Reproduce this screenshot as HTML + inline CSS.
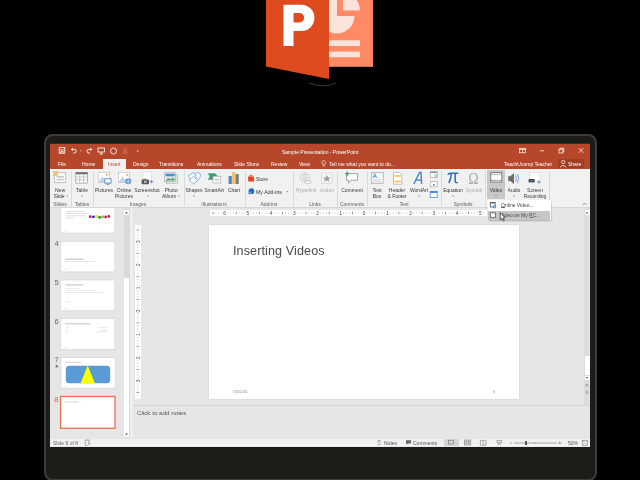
<!DOCTYPE html>
<html><head><meta charset="utf-8">
<style>
html,body{margin:0;padding:0;width:640px;height:480px;overflow:hidden;background:#000;}
*{box-sizing:border-box;}
body{position:relative;font-family:"Liberation Sans",sans-serif;}
.a{position:absolute;}
svg{will-change:transform;}
.t{will-change:transform;position:absolute;white-space:nowrap;font-size:5px;line-height:6px;color:#383838;}
.w{color:#fff;}
.lbl{will-change:transform;position:absolute;white-space:nowrap;font-size:5px;line-height:6px;color:#5c5c5c;top:201.3px;}
.sep{position:absolute;top:171px;width:1px;height:35px;background:#dadada;}
.c{text-align:center;transform:translateX(-50%);}
.dd{font-size:2.6px;color:#777;vertical-align:0.6px;}
</style></head><body>

<!-- PowerPoint logo -->
<svg class="a" style="left:0;top:0" width="640" height="100" viewBox="0 0 640 100">
  <rect x="328" y="0" width="45" height="66.8" fill="#ff8a65"/>
  <path d="M337 -2 V16 H354.5 A17.5 17.5 0 1 1 337 -1.5 Z" fill="#fbe3db"/>
  <path d="M343 10.4 V-6.6 A17 17 0 0 1 360 10.4 Z" fill="#fbe3db"/>
  <rect x="329" y="40.3" width="31" height="5.7" fill="#fbe3db"/>
  <rect x="329" y="51.6" width="31" height="5.6" fill="#fbe3db"/>
  <path d="M266 0 H329 V79 L266 66.5 Z" fill="#dd4b1e"/>
  <path d="M283.5 46 V4.7 H301.3 A13.15 13.15 0 0 1 301.3 31 H293.5 V46 Z M293.5 13.1 V22.5 H299.5 A4.7 4.7 0 0 0 299.5 13.1 Z" fill="#fff" fill-rule="evenodd"/>
  <path d="M308.8 83.2 Q324 88.6 336 83" stroke="#383838" stroke-width="1" fill="none"/>
</svg>

<!-- Bezel -->
<div class="a" style="left:44px;top:134.2px;width:553px;height:346.5px;border-radius:8.5px;background:#1c1c19;border:2px solid #3c3c3e;"></div>

<!-- Screen -->
<div class="a" style="left:50px;top:143.5px;width:539.5px;height:303px;background:#e6e6e6;overflow:hidden;">
</div>

<!-- Title bar + tabs -->
<div class="a" style="left:50px;top:143px;width:540px;height:1px;background:#22372b;"></div>
<div class="a" style="left:50px;top:143.9px;width:540px;height:25.1px;background:#b7472a;"></div>
<div class="t w" style="left:281.5px;top:148.5px;">Sample Presentation - PowerPoint</div>

<!-- tabs -->
<div class="a" style="left:102.5px;top:158.5px;width:23.7px;height:11px;background:#f1f1f1;"></div>
<div class="t w" style="left:57.8px;top:161px;">File</div>
<div class="t w" style="left:82px;top:161px;">Home</div>
<div class="t" style="left:107.8px;top:161px;color:#b7472a">Insert</div>
<div class="t w" style="left:132.5px;top:161px;">Design</div>
<div class="t w" style="left:159px;top:161px;">Transitions</div>
<div class="t w" style="left:197px;top:161px;">Animations</div>
<div class="t w" style="left:234px;top:161px;">Slide Show</div>
<div class="t w" style="left:270.6px;top:161px;">Review</div>
<div class="t w" style="left:298.7px;top:161px;">View</div>
<div class="t w" style="left:328.7px;top:161px;">Tell me what you want to do...</div>
<div class="t w" style="left:504px;top:161px;">TeachUcomp Teacher</div>

<!-- Ribbon -->
<div class="a" style="left:50px;top:169px;width:539.5px;height:38.5px;background:#f1f1f1;border-bottom:1px solid #d6d6d6"></div>


<!-- QAT icons -->
<svg class="a" style="left:50px;top:143px" width="100" height="14" viewBox="50 143 100 14">
  <g stroke="#fff" stroke-width="0.8" fill="none">
    <rect x="59.2" y="147.6" width="5.6" height="5.6"/>
    <path d="M59.2 149.9 H64.8 M60.8 153.2 V151.5 H63.2 V153.2"/>
    <path d="M72.6 149.4 H74.4 A1.8 1.8 0 0 1 74.4 153 H73.2" stroke-width="0.9"/>
    <path d="M90.6 149.4 H88.8 A1.8 1.8 0 0 0 88.8 153 H90" stroke-width="0.9"/>
    <rect x="98" y="148" width="6.5" height="4"/>
    <path d="M101.2 152 V154 M99.5 154 H103"/>
    <circle cx="113.5" cy="151" r="3"/>
  </g>
  <path d="M80 150.5 H82 L81 151.6 Z" fill="#fff"/><path d="M70.8 149.4 L73 147.8 V151 Z M92.4 149.4 L90.2 147.8 V151 Z" fill="#fff"/>
  <path d="M123.1 153.2 Q123.1 151.3 125.2 151.3 Q127.3 151.3 127.3 153.2 Z" stroke="#d98b75" stroke-width="0.6" fill="none"/><circle cx="125.2" cy="149.5" r="1.3" stroke="#d98b75" stroke-width="0.6" fill="none"/>
  <path d="M136.7 150.7 H138.7 L137.7 151.9 Z" fill="#fff"/>
</svg>
<!-- window controls -->
<svg class="a" style="left:510px;top:143px" width="80" height="14" viewBox="510 143 80 14">
  <g stroke="#fff" stroke-width="0.7" fill="none">
    <rect x="519.6" y="148.3" width="6" height="4.5"/>
    <path d="M519.6 149.5 H525.6 M522.6 149.5 V152.8"/>
    <path d="M540 150.8 H544.2"/>
    <rect x="559" y="149.2" width="3.8" height="3.8"/>
    <path d="M560 149.2 V148.2 H563.8 V152 H562.8"/>
    <path d="M578.7 148 L583.4 152.8 M583.4 148 L578.7 152.8"/>
  </g>
</svg>
<div class="a" style="left:557.5px;top:159.3px;width:26.3px;height:8.6px;background:#a13d23"></div>
<svg class="a" style="left:559px;top:159px" width="9" height="9" viewBox="559 159 9 9">
  <g stroke="#fff" stroke-width="0.7" fill="none">
    <circle cx="563.2" cy="162" r="1.7"/>
    <path d="M560.3 167.5 A3 3 0 0 1 566 167.5"/>
  </g>
</svg>
<div class="t w" style="left:567.9px;top:161px;">Share</div>
<!-- tell me bulb -->
<svg class="a" style="left:321px;top:160px" width="6" height="7" viewBox="321 160 6 7">
  <path d="M322 163 A1.8 1.8 0 1 1 325.4 163 Q324.6 164 324.6 165 H322.8 Q322.8 164 322 163 Z M322.9 166 H324.5" stroke="#fff" stroke-width="0.6" fill="none"/>
</svg>

<!-- ribbon separators -->
<div class="sep" style="left:70.6px"></div>
<div class="sep" style="left:92.5px"></div>
<div class="sep" style="left:183.5px"></div>
<div class="sep" style="left:244.6px"></div>
<div class="sep" style="left:292.7px"></div>
<div class="sep" style="left:337.3px"></div>
<div class="sep" style="left:366.5px"></div>
<div class="sep" style="left:440.5px"></div>
<div class="sep" style="left:485.3px"></div>
<div class="sep" style="left:549px"></div>

<!-- video highlight -->
<div class="a" style="left:487.2px;top:170px;width:17.6px;height:29.2px;background:#c8c8c8"></div>

<!-- ribbon icons -->
<svg class="a" style="left:50px;top:169px" width="540" height="40" viewBox="50 169 540 40">
  <!-- New slide -->
  <rect x="54.3" y="172.8" width="11.5" height="9.8" fill="#fff" stroke="#9a9a9a" stroke-width="0.6"/>
  <rect x="56.5" y="176" width="7.5" height="1.6" fill="#c9c9c9"/>
  <rect x="56.5" y="178.8" width="7.5" height="1.6" fill="#c9c9c9"/>
  <rect x="53.8" y="171.6" width="4" height="4" fill="#f6c27c" stroke="#e3a24c" stroke-width="0.4"/>
  <!-- Table -->
  <rect x="75.8" y="172.3" width="11.8" height="10.8" fill="#fff" stroke="#8a8a8a" stroke-width="0.6"/>
  <rect x="75.8" y="172.3" width="11.8" height="2" fill="#6a6a6a"/>
  <path d="M75.8 177 H87.6 M75.8 179.8 H87.6 M79.7 174.3 V183 M83.6 174.3 V183" stroke="#9a9a9a" stroke-width="0.5"/>
  <!-- Pictures -->
  <rect x="98.2" y="172.2" width="11.2" height="10.2" fill="#fff" stroke="#a8a8a8" stroke-width="0.5"/>
  <path d="M98.5 182.2 L102 176.5 L105 180 L107 178.5 L109.2 181 V182.2 Z" fill="#bcd3ea"/>
  <circle cx="107" cy="174.8" r="1.1" fill="#f5b040"/>
  <rect x="104.8" y="178.8" width="6.2" height="4.3" fill="#fff" stroke="#3c7fc5" stroke-width="0.8"/>
  <path d="M107.9 183.1 V184.3 M106.5 184.3 H109.3" stroke="#3c7fc5" stroke-width="0.8"/>
  <!-- Online Pictures -->
  <rect x="118.4" y="172.2" width="11.2" height="10.2" fill="#fff" stroke="#a8a8a8" stroke-width="0.5"/>
  <path d="M118.7 182.2 L122.2 176.5 L125.2 180 L127.2 178.5 L129.4 181 V182.2 Z" fill="#bcd3ea"/>
  <circle cx="127.2" cy="174.8" r="1.1" fill="#f5b040"/>
  <circle cx="128.2" cy="181.3" r="3" fill="#5b9bd5"/>
  <path d="M126.2 181.3 H130.2 M128.2 178.3 V184.3" stroke="#fff" stroke-width="0.5"/>
  <!-- Screenshot -->
  <rect x="143" y="172" width="8" height="8.5" fill="#fff" stroke="#bdbdbd" stroke-width="0.5" stroke-dasharray="1 0.6"/>
  <rect x="141.6" y="179.6" width="7.4" height="4.6" rx="0.6" fill="#5a5a5a"/>
  <rect x="143.5" y="178.8" width="2.6" height="1.2" fill="#5a5a5a"/>
  <circle cx="145.3" cy="181.8" r="1.3" fill="#fff"/>
  <circle cx="145.3" cy="181.8" r="0.8" fill="#5a5a5a"/>
  <path d="M151.6 180 V183.4 M149.9 181.7 H153.3" stroke="#3c7fc5" stroke-width="0.8"/>
  <!-- Photo Album -->
  <rect x="166.4" y="174.6" width="11.2" height="8.6" fill="#e4e4e4" stroke="#a0a0a0" stroke-width="0.5"/>
  <rect x="164.6" y="172.8" width="11" height="8.6" fill="#fff" stroke="#8a8a8a" stroke-width="0.5"/>
  <rect x="165.5" y="173.7" width="9.2" height="6.8" fill="#dfe9f3"/>
  <rect x="165.5" y="173.7" width="9.2" height="2.6" fill="#4a8ed0"/>
  <path d="M165.5 180.5 L168.2 178 L170.6 179.2 L172.6 177.8 L174.7 179 V180.5 Z" fill="#5aa060"/>
  <!-- Shapes -->
  <path d="M195 174 Q197.5 171.2 200 173.2 Q201.6 176 199 179 L195.5 182.6 Z" fill="#fff" stroke="#5a95d5" stroke-width="0.7"/>
  <path d="M188.3 175.6 L193.8 172.4 L196.6 177.8 L191 181 Z" fill="#fff" stroke="#5a95d5" stroke-width="0.7"/>
  <path d="M193.6 176.2 L197.6 180.2 L193.6 184.2 L189.6 180.2 Z" fill="#fff" stroke="#5a95d5" stroke-width="0.7"/>
  <!-- SmartArt -->
  <path d="M207.8 173.2 H215 L218 176.5 L215 179.8 H207.8 L209.6 176.5 Z" fill="#3e9e77"/>
  <rect x="213" y="176.2" width="7.8" height="6.8" fill="#fff" stroke="#9a9a9a" stroke-width="0.6"/>
  <rect x="214.6" y="178.4" width="4.6" height="2.4" fill="#d4d4d4"/>
  <!-- Chart -->
  <rect x="228.6" y="176" width="3.2" height="8" fill="#4a86c8"/>
  <rect x="232" y="172" width="3.2" height="12" fill="#f5c36b"/>
  <rect x="235.5" y="174" width="3.2" height="10" fill="#7b7b7b"/>
  <!-- Store -->
  <path d="M248 176.4 H253.9 L254.2 181.6 H248.3 Z" fill="#e9451d"/>
  <path d="M249.3 176.4 L249.8 174.7 H252.2 L252.6 176.4" fill="#f06a48"/>
  <!-- My add-ins -->
  <circle cx="251.4" cy="191.2" r="2.9" fill="#1e6fc8"/>
  <path d="M248.2 192.2 H250.4 V194.4 H248.2 Z" fill="#1e6fc8" stroke="#f1f1f1" stroke-width="0.5"/>
  <path d="M286.5 191.2 H288.5 L287.5 192.3 Z" fill="#555"/>
  <!-- Hyperlink (faded) -->
  <circle cx="305" cy="177.6" r="4.8" fill="none" stroke="#c8c8c8" stroke-width="0.6"/>
  <path d="M300.2 177.6 H309.8 M305 172.8 V182.4 M301 175 H309 M301 180.2 H309 M305 172.8 Q301.8 177.6 305 182.4 Q308.2 177.6 305 172.8" stroke="#c8c8c8" stroke-width="0.5" fill="none"/>
  <rect x="305" y="180.6" width="6" height="3" rx="1.5" fill="#f1f1f1" stroke="#b8b8b8" stroke-width="0.6"/>
  <!-- Action (faded) -->
  <rect x="321.3" y="173" width="11" height="10.5" fill="#f5f5f5" stroke="#cfcfcf" stroke-width="0.6"/>
  <path d="M326.8 174.8 L328 177.4 L330.8 177.6 L328.6 179.4 L329.4 182 L326.8 180.5 L324.2 182 L325 179.4 L322.8 177.6 L325.6 177.4 Z" fill="#a0a0a0"/>
  <!-- Comment -->
  <path d="M346.5 173.6 H357.6 V180.2 H351 L348.6 183.2 V180.2 H346.5 Z" fill="#fff" stroke="#6a6a6a" stroke-width="0.6"/>
  <path d="M347.3 171.4 V175.8 M345.1 173.6 H349.5" stroke="#3ea07a" stroke-width="1.3"/>
  <!-- Text box -->
  <rect x="371.4" y="172.4" width="11.8" height="11" fill="#f7f7f7" stroke="#9b9b9b" stroke-width="0.6"/>
  <path d="M373 178 L374.8 173.5 L376.6 178 M373.6 176.5 H376" stroke="#3c7fc5" stroke-width="0.7" fill="none"/>
  <path d="M373 179.8 H381.6 M373 181.6 H381.6" stroke="#c9c9c9" stroke-width="0.7"/>
  <!-- Header footer -->
  <path d="M393.5 172.4 H399.6 L401.8 174.6 V184.2 H393.5 Z" fill="#fff" stroke="#9b9b9b" stroke-width="0.6"/>
  <rect x="394.5" y="175.2" width="6.3" height="1.5" fill="#f5b942"/>
  <rect x="394.5" y="180.8" width="6.3" height="1.5" fill="#f5b942"/>
  <!-- WordArt -->
  <path d="M413.8 184 L419.6 172.4 H421 L421.6 184 M415.6 180.2 H421.4" stroke="#3c7fc5" stroke-width="1.3" fill="none"/>
  <!-- small text icons -->
  <rect x="430.2" y="171.8" width="7" height="5.4" fill="#fff" stroke="#8f8f8f" stroke-width="0.5"/>
  <rect x="430.2" y="171.8" width="7" height="1.2" fill="#8f8f8f"/>
  <circle cx="436" cy="176" r="1.4" fill="#fff" stroke="#3c7fc5" stroke-width="0.5"/>
  <rect x="430.2" y="181.7" width="7" height="5.2" fill="#fff" stroke="#8f8f8f" stroke-width="0.5"/>
  <rect x="433" y="184.1" width="1.6" height="1.6" fill="#3c7fc5"/>
  <rect x="430.2" y="191.3" width="7" height="6.2" fill="#fff" stroke="#3c7fc5" stroke-width="0.7"/>
  <rect x="430.2" y="191.3" width="7" height="1.6" fill="#3c7fc5"/>
  <!-- Equation pi -->
  <path d="M447.8 174.8 Q448.5 173.2 450.5 173.2 H458.3 M451.2 173.2 Q451.2 179 448.8 183 M455.2 173.2 V181.5 Q455.4 183 457.8 182.5" stroke="#2b6fbf" stroke-width="1.5" fill="none"/>
  <!-- Omega faded -->
  <text x="0" y="0" font-family="Liberation Serif" font-size="14" fill="#a9a9a9" text-anchor="middle" transform="translate(473.4 183.6) scale(1 1.17)">Ω</text>
  <!-- Video -->
  <rect x="490.8" y="172.6" width="11" height="9.4" fill="#fff" stroke="#6a6a6a" stroke-width="0.8"/>
  <path d="M490.8 174.2 H501.8 M490.8 180.4 H501.8" stroke="#6a6a6a" stroke-width="1.1" stroke-dasharray="0.8 0.8"/>
  <!-- Audio -->
  <path d="M508.2 176.3 H510.3 L514 173.2 V184 L510.3 180.9 H508.2 Z" fill="#6a6a6a"/>
  <path d="M515.6 175.4 Q517 178.6 515.6 181.8 M517.6 174 Q519.6 178.6 517.6 183.2" stroke="#3c7fc5" stroke-width="0.7" fill="none"/>
  <!-- Screen recording -->
  <rect x="530" y="172.4" width="10" height="8.6" fill="#fff" stroke="#9d9d9d" stroke-width="0.4" stroke-dasharray="0.8 0.6"/>
  <rect x="528.6" y="179" width="6" height="3.4" fill="#4a4a4a"/>
  <path d="M529.8 180.7 H533.2" stroke="#3c7fc5" stroke-width="0.8"/>
  <path d="M539 180.4 V183.6 M537.4 182 H540.6" stroke="#3c7fc5" stroke-width="0.8"/>
  <!-- collapse caret -->
  <path d="M582.8 205 L584.6 203.2 L586.4 205" stroke="#555" stroke-width="0.6" fill="none"/>
</svg>

<!-- ribbon text -->
<div class="t c" style="left:60.1px;top:186.6px">New</div>
<div class="t c" style="left:60.5px;top:193.1px">Slide <span class="dd">▼</span></div>
<div class="t c" style="left:81.75px;top:186.6px">Table</div>
<div class="t c" style="left:81.75px;top:193.1px"><span class="dd">▼</span></div>
<div class="t c" style="left:103.75px;top:186.6px">Pictures</div>
<div class="t c" style="left:124.4px;top:186.6px">Online</div>
<div class="t c" style="left:124.1px;top:193.1px">Pictures</div>
<div class="t c" style="left:147.25px;top:186.6px">Screenshot</div>
<div class="t c" style="left:147.7px;top:193.1px"><span class="dd">▼</span></div>
<div class="t c" style="left:171.1px;top:186.6px">Photo</div>
<div class="t c" style="left:171px;top:193.1px">Album <span class="dd">▼</span></div>
<div class="t c" style="left:194px;top:186.6px">Shapes</div>
<div class="t c" style="left:194px;top:193.1px"><span class="dd">▼</span></div>
<div class="t c" style="left:214px;top:186.6px">SmartArt</div>
<div class="t c" style="left:234px;top:186.6px">Chart</div>
<div class="t" style="left:255.75px;top:175.8px">Store</div>
<div class="t" style="left:255.75px;top:188.7px;font-size:5.25px">My Add-ins</div>
<div class="t c" style="left:305.8px;top:186.6px;color:#aaa">Hyperlink</div>
<div class="t c" style="left:326.9px;top:186.6px;color:#aaa">Action</div>
<div class="t c" style="left:352px;top:186.6px">Comment</div>
<div class="t c" style="left:377.2px;top:186.6px">Text</div>
<div class="t c" style="left:377.2px;top:193.1px">Box</div>
<div class="t c" style="left:397.2px;top:186.6px">Header</div>
<div class="t c" style="left:397px;top:193.1px">&amp; Footer</div>
<div class="t c" style="left:418.5px;top:186.6px">WordArt</div>
<div class="t c" style="left:418.6px;top:193.1px"><span class="dd">▼</span></div>
<div class="t c" style="left:452.9px;top:186.6px">Equation</div>
<div class="t c" style="left:453px;top:193.1px"><span class="dd">▼</span></div>
<div class="t c" style="left:473.75px;top:186.6px;color:#aaa">Symbol</div>
<div class="t c" style="left:496.3px;top:186.6px">Video</div>
<div class="t c" style="left:496px;top:193.1px"><span class="dd">▼</span></div>
<div class="t c" style="left:513.9px;top:186.6px">Audio</div>
<div class="t c" style="left:514px;top:193.1px"><span class="dd">▼</span></div>
<div class="t c" style="left:535px;top:186.6px">Screen</div>
<div class="t c" style="left:535.25px;top:193.1px">Recording</div>

<div class="lbl c" style="left:60.3px">Slides</div>
<div class="lbl c" style="left:81.5px">Tables</div>
<div class="lbl c" style="left:137.8px">Images</div>
<div class="lbl c" style="left:214px">Illustrations</div>
<div class="lbl c" style="left:268.6px">Add-ins</div>
<div class="lbl c" style="left:315.1px">Links</div>
<div class="lbl c" style="left:352px">Comments</div>
<div class="lbl c" style="left:403.5px">Text</div>
<div class="lbl c" style="left:462.6px">Symbols</div>

<!-- Left pane -->
<div class="a" style="left:50px;top:208px;width:80px;height:230.3px;background:#e6e6e6;"></div>
<!-- left scrollbar -->
<div class="a" style="left:123.5px;top:208px;width:6px;height:230px;background:#dadada;"></div>
<div class="a" style="left:123.8px;top:277.5px;width:5.5px;height:154.5px;background:#fff;"></div>
<div class="a" style="left:123.8px;top:209.7px;width:5.5px;height:5.5px;background:#fff;"></div>
<div class="a" style="left:123.8px;top:432px;width:5.5px;height:5px;background:#fff;"></div>
<svg class="a" style="left:123px;top:209px" width="7" height="30" viewBox="123 209 7 30"><path d="M125.2 213.4 L126.5 211.6 L127.8 213.4 Z" fill="#555"/></svg>
<svg class="a" style="left:123px;top:430px" width="7" height="8" viewBox="123 430 7 8"><path d="M125.2 433.6 L126.5 435.4 L127.8 433.6 Z" fill="#555"/></svg>
<div class="a" style="left:129.5px;top:208px;width:3px;height:230px;background:#eeeeee;"></div>

<!-- thumbnails -->
<svg class="a" style="left:50px;top:208px" width="74" height="230" viewBox="50 208 74 230">
  <defs><filter id="sh" x="-10%" y="-10%" width="120%" height="130%"><feDropShadow dx="0" dy="0.3" stdDeviation="0.4" flood-color="#000" flood-opacity="0.25"/></filter></defs>
  <!-- thumb 3 -->
  <rect x="60.8" y="202" width="54" height="31" fill="#fff" stroke="#d2d2d2" stroke-width="0.6"/>
  <g fill="#d2d2d2">
    <rect x="66" y="211" width="18" height="0.7"/>
    <rect x="66" y="213.2" width="21" height="0.7"/>
    <rect x="66" y="215.5" width="20" height="0.7"/>
    <rect x="66" y="217.6" width="8" height="0.7"/>
  </g>
  <g>
    <circle cx="90.2" cy="216.7" r="1.4" fill="#e02020"/>
    <circle cx="93.4" cy="216.9" r="1.4" fill="#2030d0"/>
    <circle cx="96.4" cy="216.4" r="1.4" fill="#f0d010"/>
    <circle cx="99.5" cy="217.2" r="1.5" fill="#10a020"/>
    <circle cx="102.6" cy="216.9" r="1.4" fill="#f08020"/>
    <circle cx="105.6" cy="217" r="1.4" fill="#7040a0"/>
    <circle cx="108.8" cy="216.5" r="1.4" fill="#e02020"/>
  </g>
  <path d="M90.2 218 V224 M93.4 218 V224 M96.4 218 V224 M99.5 218.5 V225 M102.6 218 V224 M105.6 218 V224 M108.8 218 V224" stroke="#e0e0e0" stroke-width="0.4"/>
  <rect x="65" y="230.8" width="2.5" height="0.5" fill="#ccc"/>
  <!-- thumb 4 -->
  <text x="54.4" y="245.5" font-size="7.6" fill="#666" font-family="Liberation Sans">4</text>
  <rect x="60.8" y="241.3" width="54" height="30.6" fill="#fff" stroke="#d2d2d2" stroke-width="0.6"/>
  <rect x="65.3" y="258.5" width="18" height="1.6" fill="#d6d0ce"/>
  <rect x="65.3" y="261.4" width="30" height="0.6" fill="#d8d8d8"/>
  <rect x="65" y="269.5" width="2.5" height="0.5" fill="#ccc"/>
  <!-- thumb 5 -->
  <text x="54.4" y="284.9" font-size="7.6" fill="#666" font-family="Liberation Sans">5</text>
  <rect x="60.8" y="280" width="54" height="30.8" fill="#fff" stroke="#d2d2d2" stroke-width="0.6"/>
  <rect x="65.3" y="284.2" width="18" height="1.4" fill="#d6d0ce"/>
  <rect x="65.3" y="288.2" width="14" height="0.6" fill="#dcdcdc"/>
  <rect x="65.3" y="290.5" width="32" height="0.6" fill="#dcdcdc"/>
  <rect x="65.3" y="292.4" width="39" height="0.6" fill="#dcdcdc"/>
  <rect x="65.3" y="301.5" width="3.5" height="0.5" fill="#ccc"/>
  <rect x="65" y="308.5" width="2.5" height="0.5" fill="#ccc"/>
  <!-- thumb 6 -->
  <text x="54.4" y="323.5" font-size="7.6" fill="#666" font-family="Liberation Sans">6</text>
  <rect x="60.8" y="318.7" width="54" height="30.6" fill="#fff" stroke="#d2d2d2" stroke-width="0.6"/>
  <rect x="65.3" y="323" width="25" height="1.4" fill="#d6d0ce"/>
  <rect x="65.3" y="327.5" width="4" height="0.6" fill="#dcdcdc"/>
  <rect x="65.3" y="329.8" width="2" height="0.6" fill="#dcdcdc"/>
  <rect x="65.3" y="331.6" width="3" height="0.6" fill="#dcdcdc"/>
  <rect x="98" y="327.5" width="9" height="0.6" fill="#dcdcdc"/>
  <rect x="100" y="329.8" width="7" height="0.6" fill="#dcdcdc"/>
  <rect x="97" y="331.6" width="10" height="0.6" fill="#dcdcdc"/>
  <rect x="65" y="347" width="2.5" height="0.5" fill="#ccc"/>
  <!-- thumb 7 -->
  <text x="54.4" y="362.1" font-size="7.6" fill="#666" font-family="Liberation Sans">7</text>
  <path d="M56.7 364.6 L57.2 365.7 L58.4 365.8 L57.5 366.6 L57.8 367.8 L56.7 367.1 L55.6 367.8 L55.9 366.6 L55 365.8 L56.2 365.7 Z" fill="#555"/>
  <rect x="61" y="357.7" width="54.2" height="30.4" fill="#fff" stroke="#d2d2d2" stroke-width="0.6"/>
  <rect x="65.5" y="361.8" width="16" height="1" fill="#d6d0ce"/>
  <rect x="65.8" y="365.8" width="44.4" height="17.5" rx="3.5" fill="#5b9bd5"/>
  <path d="M87.7 365.6 L80.6 383.3 H94.9 Z" fill="#ffff00"/>
  <rect x="65" y="386" width="2.5" height="0.5" fill="#ccc"/>
  <!-- thumb 8 selected -->
  <text x="54.2" y="401.6" font-size="7.6" fill="#e2603d" font-family="Liberation Sans">8</text>
  <rect x="60.6" y="396.5" width="54.4" height="31.8" fill="#fff" stroke="#e8714d" stroke-width="1.3"/>
  <rect x="64.5" y="401.5" width="14" height="0.9" fill="#d6d0ce"/>
  <rect x="65" y="425.8" width="2.5" height="0.5" fill="#ccc"/>
</svg>

<!-- rulers -->
<div class="a" style="left:209.5px;top:210.2px;width:277.4px;height:5.8px;background:#fff;"></div>
<div class="a" style="left:135.2px;top:225.3px;width:5.4px;height:173.6px;background:#fff;"></div>
<svg class="a" style="left:130px;top:208px" width="460" height="200" viewBox="130 208 460 200" font-family="Liberation Sans" font-size="4.7" fill="#444">
  <g id="hr"><rect x="212.69" y="211.7" width="0.6" height="2.6" fill="#555"/><rect x="215.50" y="212.6" width="0.8" height="0.9" fill="#aaa"/><rect x="218.40" y="212.6" width="0.8" height="0.9" fill="#aaa"/><rect x="221.31" y="212.6" width="0.8" height="0.9" fill="#aaa"/><text x="224.61" y="214.8" text-anchor="middle">6</text><rect x="227.12" y="212.6" width="0.8" height="0.9" fill="#aaa"/><rect x="230.02" y="212.6" width="0.8" height="0.9" fill="#aaa"/><rect x="232.93" y="212.6" width="0.8" height="0.9" fill="#aaa"/><rect x="235.93" y="211.7" width="0.6" height="2.6" fill="#555"/><rect x="238.74" y="212.6" width="0.8" height="0.9" fill="#aaa"/><rect x="241.64" y="212.6" width="0.8" height="0.9" fill="#aaa"/><rect x="244.55" y="212.6" width="0.8" height="0.9" fill="#aaa"/><text x="247.85" y="214.8" text-anchor="middle">5</text><rect x="250.36" y="212.6" width="0.8" height="0.9" fill="#aaa"/><rect x="253.26" y="212.6" width="0.8" height="0.9" fill="#aaa"/><rect x="256.17" y="212.6" width="0.8" height="0.9" fill="#aaa"/><rect x="259.17" y="211.7" width="0.6" height="2.6" fill="#555"/><rect x="261.98" y="212.6" width="0.8" height="0.9" fill="#aaa"/><rect x="264.88" y="212.6" width="0.8" height="0.9" fill="#aaa"/><rect x="267.79" y="212.6" width="0.8" height="0.9" fill="#aaa"/><text x="271.09" y="214.8" text-anchor="middle">4</text><rect x="273.60" y="212.6" width="0.8" height="0.9" fill="#aaa"/><rect x="276.50" y="212.6" width="0.8" height="0.9" fill="#aaa"/><rect x="279.41" y="212.6" width="0.8" height="0.9" fill="#aaa"/><rect x="282.41" y="211.7" width="0.6" height="2.6" fill="#555"/><rect x="285.22" y="212.6" width="0.8" height="0.9" fill="#aaa"/><rect x="288.12" y="212.6" width="0.8" height="0.9" fill="#aaa"/><rect x="291.03" y="212.6" width="0.8" height="0.9" fill="#aaa"/><text x="294.33" y="214.8" text-anchor="middle">3</text><rect x="296.84" y="212.6" width="0.8" height="0.9" fill="#aaa"/><rect x="299.74" y="212.6" width="0.8" height="0.9" fill="#aaa"/><rect x="302.65" y="212.6" width="0.8" height="0.9" fill="#aaa"/><rect x="305.65" y="211.7" width="0.6" height="2.6" fill="#555"/><rect x="308.46" y="212.6" width="0.8" height="0.9" fill="#aaa"/><rect x="311.36" y="212.6" width="0.8" height="0.9" fill="#aaa"/><rect x="314.27" y="212.6" width="0.8" height="0.9" fill="#aaa"/><text x="317.57" y="214.8" text-anchor="middle">2</text><rect x="320.07" y="212.6" width="0.8" height="0.9" fill="#aaa"/><rect x="322.98" y="212.6" width="0.8" height="0.9" fill="#aaa"/><rect x="325.88" y="212.6" width="0.8" height="0.9" fill="#aaa"/><rect x="328.89" y="211.7" width="0.6" height="2.6" fill="#555"/><rect x="331.69" y="212.6" width="0.8" height="0.9" fill="#aaa"/><rect x="334.60" y="212.6" width="0.8" height="0.9" fill="#aaa"/><rect x="337.50" y="212.6" width="0.8" height="0.9" fill="#aaa"/><text x="340.81" y="214.8" text-anchor="middle">1</text><rect x="343.31" y="212.6" width="0.8" height="0.9" fill="#aaa"/><rect x="346.22" y="212.6" width="0.8" height="0.9" fill="#aaa"/><rect x="349.12" y="212.6" width="0.8" height="0.9" fill="#aaa"/><rect x="352.13" y="211.7" width="0.6" height="2.6" fill="#555"/><rect x="354.94" y="212.6" width="0.8" height="0.9" fill="#aaa"/><rect x="357.84" y="212.6" width="0.8" height="0.9" fill="#aaa"/><rect x="360.75" y="212.6" width="0.8" height="0.9" fill="#aaa"/><text x="364.05" y="214.8" text-anchor="middle">0</text><rect x="366.56" y="212.6" width="0.8" height="0.9" fill="#aaa"/><rect x="369.46" y="212.6" width="0.8" height="0.9" fill="#aaa"/><rect x="372.37" y="212.6" width="0.8" height="0.9" fill="#aaa"/><rect x="375.37" y="211.7" width="0.6" height="2.6" fill="#555"/><rect x="378.18" y="212.6" width="0.8" height="0.9" fill="#aaa"/><rect x="381.08" y="212.6" width="0.8" height="0.9" fill="#aaa"/><rect x="383.99" y="212.6" width="0.8" height="0.9" fill="#aaa"/><text x="387.29" y="214.8" text-anchor="middle">1</text><rect x="389.80" y="212.6" width="0.8" height="0.9" fill="#aaa"/><rect x="392.70" y="212.6" width="0.8" height="0.9" fill="#aaa"/><rect x="395.61" y="212.6" width="0.8" height="0.9" fill="#aaa"/><rect x="398.61" y="211.7" width="0.6" height="2.6" fill="#555"/><rect x="401.42" y="212.6" width="0.8" height="0.9" fill="#aaa"/><rect x="404.32" y="212.6" width="0.8" height="0.9" fill="#aaa"/><rect x="407.23" y="212.6" width="0.8" height="0.9" fill="#aaa"/><text x="410.53" y="214.8" text-anchor="middle">2</text><rect x="413.04" y="212.6" width="0.8" height="0.9" fill="#aaa"/><rect x="415.94" y="212.6" width="0.8" height="0.9" fill="#aaa"/><rect x="418.85" y="212.6" width="0.8" height="0.9" fill="#aaa"/><rect x="421.85" y="211.7" width="0.6" height="2.6" fill="#555"/><rect x="424.66" y="212.6" width="0.8" height="0.9" fill="#aaa"/><rect x="427.56" y="212.6" width="0.8" height="0.9" fill="#aaa"/><rect x="430.47" y="212.6" width="0.8" height="0.9" fill="#aaa"/><text x="433.77" y="214.8" text-anchor="middle">3</text><rect x="436.27" y="212.6" width="0.8" height="0.9" fill="#aaa"/><rect x="439.18" y="212.6" width="0.8" height="0.9" fill="#aaa"/><rect x="442.08" y="212.6" width="0.8" height="0.9" fill="#aaa"/><rect x="445.09" y="211.7" width="0.6" height="2.6" fill="#555"/><rect x="447.89" y="212.6" width="0.8" height="0.9" fill="#aaa"/><rect x="450.80" y="212.6" width="0.8" height="0.9" fill="#aaa"/><rect x="453.70" y="212.6" width="0.8" height="0.9" fill="#aaa"/><text x="457.01" y="214.8" text-anchor="middle">4</text><rect x="459.51" y="212.6" width="0.8" height="0.9" fill="#aaa"/><rect x="462.42" y="212.6" width="0.8" height="0.9" fill="#aaa"/><rect x="465.32" y="212.6" width="0.8" height="0.9" fill="#aaa"/><rect x="468.33" y="211.7" width="0.6" height="2.6" fill="#555"/><rect x="471.13" y="212.6" width="0.8" height="0.9" fill="#aaa"/><rect x="474.04" y="212.6" width="0.8" height="0.9" fill="#aaa"/><rect x="476.94" y="212.6" width="0.8" height="0.9" fill="#aaa"/><text x="480.25" y="214.8" text-anchor="middle">5</text><rect x="482.75" y="212.6" width="0.8" height="0.9" fill="#aaa"/><rect x="137.4" y="226.66" width="0.9" height="0.8" fill="#aaa"/><rect x="136.5" y="229.66" width="2.6" height="0.6" fill="#555"/><rect x="137.4" y="232.47" width="0.9" height="0.8" fill="#aaa"/><rect x="137.4" y="235.37" width="0.9" height="0.8" fill="#aaa"/><rect x="137.4" y="238.28" width="0.9" height="0.8" fill="#aaa"/><text x="0" y="0" text-anchor="middle" transform="translate(139.5 241.58) rotate(-90)">3</text><rect x="137.4" y="244.09" width="0.9" height="0.8" fill="#aaa"/><rect x="137.4" y="246.99" width="0.9" height="0.8" fill="#aaa"/><rect x="137.4" y="249.90" width="0.9" height="0.8" fill="#aaa"/><rect x="136.5" y="252.90" width="2.6" height="0.6" fill="#555"/><rect x="137.4" y="255.71" width="0.9" height="0.8" fill="#aaa"/><rect x="137.4" y="258.61" width="0.9" height="0.8" fill="#aaa"/><rect x="137.4" y="261.52" width="0.9" height="0.8" fill="#aaa"/><text x="0" y="0" text-anchor="middle" transform="translate(139.5 264.82) rotate(-90)">2</text><rect x="137.4" y="267.32" width="0.9" height="0.8" fill="#aaa"/><rect x="137.4" y="270.23" width="0.9" height="0.8" fill="#aaa"/><rect x="137.4" y="273.13" width="0.9" height="0.8" fill="#aaa"/><rect x="136.5" y="276.14" width="2.6" height="0.6" fill="#555"/><rect x="137.4" y="278.94" width="0.9" height="0.8" fill="#aaa"/><rect x="137.4" y="281.85" width="0.9" height="0.8" fill="#aaa"/><rect x="137.4" y="284.75" width="0.9" height="0.8" fill="#aaa"/><text x="0" y="0" text-anchor="middle" transform="translate(139.5 288.06) rotate(-90)">1</text><rect x="137.4" y="290.56" width="0.9" height="0.8" fill="#aaa"/><rect x="137.4" y="293.47" width="0.9" height="0.8" fill="#aaa"/><rect x="137.4" y="296.38" width="0.9" height="0.8" fill="#aaa"/><rect x="136.5" y="299.38" width="2.6" height="0.6" fill="#555"/><rect x="137.4" y="302.19" width="0.9" height="0.8" fill="#aaa"/><rect x="137.4" y="305.09" width="0.9" height="0.8" fill="#aaa"/><rect x="137.4" y="308.00" width="0.9" height="0.8" fill="#aaa"/><text x="0" y="0" text-anchor="middle" transform="translate(139.5 311.30) rotate(-90)">0</text><rect x="137.4" y="313.81" width="0.9" height="0.8" fill="#aaa"/><rect x="137.4" y="316.71" width="0.9" height="0.8" fill="#aaa"/><rect x="137.4" y="319.62" width="0.9" height="0.8" fill="#aaa"/><rect x="136.5" y="322.62" width="2.6" height="0.6" fill="#555"/><rect x="137.4" y="325.43" width="0.9" height="0.8" fill="#aaa"/><rect x="137.4" y="328.33" width="0.9" height="0.8" fill="#aaa"/><rect x="137.4" y="331.24" width="0.9" height="0.8" fill="#aaa"/><text x="0" y="0" text-anchor="middle" transform="translate(139.5 334.54) rotate(-90)">1</text><rect x="137.4" y="337.05" width="0.9" height="0.8" fill="#aaa"/><rect x="137.4" y="339.95" width="0.9" height="0.8" fill="#aaa"/><rect x="137.4" y="342.86" width="0.9" height="0.8" fill="#aaa"/><rect x="136.5" y="345.86" width="2.6" height="0.6" fill="#555"/><rect x="137.4" y="348.67" width="0.9" height="0.8" fill="#aaa"/><rect x="137.4" y="351.57" width="0.9" height="0.8" fill="#aaa"/><rect x="137.4" y="354.48" width="0.9" height="0.8" fill="#aaa"/><text x="0" y="0" text-anchor="middle" transform="translate(139.5 357.78) rotate(-90)">2</text><rect x="137.4" y="360.29" width="0.9" height="0.8" fill="#aaa"/><rect x="137.4" y="363.19" width="0.9" height="0.8" fill="#aaa"/><rect x="137.4" y="366.10" width="0.9" height="0.8" fill="#aaa"/><rect x="136.5" y="369.10" width="2.6" height="0.6" fill="#555"/><rect x="137.4" y="371.91" width="0.9" height="0.8" fill="#aaa"/><rect x="137.4" y="374.81" width="0.9" height="0.8" fill="#aaa"/><rect x="137.4" y="377.72" width="0.9" height="0.8" fill="#aaa"/><text x="0" y="0" text-anchor="middle" transform="translate(139.5 381.02) rotate(-90)">3</text><rect x="137.4" y="383.52" width="0.9" height="0.8" fill="#aaa"/><rect x="137.4" y="386.43" width="0.9" height="0.8" fill="#aaa"/><rect x="137.4" y="389.33" width="0.9" height="0.8" fill="#aaa"/><rect x="136.5" y="392.34" width="2.6" height="0.6" fill="#555"/><rect x="137.4" y="395.14" width="0.9" height="0.8" fill="#aaa"/></g>
</svg>

<!-- right scrollbar -->
<div class="a" style="left:584.3px;top:208px;width:5.2px;height:197px;background:#dcdcdc;"></div>
<div class="a" style="left:584.5px;top:210px;width:5px;height:4.8px;background:#fff;"></div>
<div class="a" style="left:584.5px;top:355.6px;width:5px;height:19.9px;background:#fff;"></div>
<div class="a" style="left:584.5px;top:375.7px;width:5px;height:4.5px;background:#fff;"></div>
<svg class="a" style="left:584px;top:208px" width="6" height="190" viewBox="584 208 6 190">
  <path d="M585.7 213.6 L587 211.8 L588.3 213.6 Z M585.7 377 L587 378.8 L588.3 377 Z" fill="#555"/>
  <path d="M585.6 385.3 L587 384 L588.4 385.3 M585.6 386.8 L587 385.5 L588.4 386.8 M585.6 391 L587 392.3 L588.4 391 M585.6 392.5 L587 393.8 L588.4 392.5" stroke="#555" stroke-width="0.45" fill="none"/>
</svg>

<!-- Slide -->
<div class="a" style="left:209px;top:225.3px;width:310px;height:174px;background:#fff;box-shadow:0 0 1px rgba(0,0,0,0.2)"></div>
<div class="t" style="left:232.7px;top:243.1px;font-size:12.6px;line-height:16px;letter-spacing:0.1px;color:#4a4a4a">Inserting Videos</div>
<div class="t" style="left:232.5px;top:389.5px;font-size:3.2px;line-height:4px;color:#888">5/25/2016</div>
<div class="t" style="left:493.4px;top:389.5px;font-size:3.2px;line-height:4px;color:#888">8</div>

<!-- Notes -->
<div class="a" style="left:132.5px;top:405px;width:457px;height:1px;background:#d2d2d2"></div>
<div class="t" style="left:137px;top:408.7px;font-size:6.22px;line-height:8px;color:#555">Click to add notes</div>

<!-- Status bar -->
<div class="a" style="left:50px;top:438.6px;width:539.5px;height:7.9px;background:#f0f0f0;border-bottom:1px solid #fafafa"></div>
<div class="t" style="left:52.8px;top:440.3px;color:#666">Slide 8 of 8</div>
<svg class="a" style="left:50px;top:438px" width="540" height="9" viewBox="50 438 540 9">
  <g stroke="#666" stroke-width="0.5" fill="none">
    <path d="M85.3 440 H89 V444 M85.3 440 V445.5 H87.5 M88 443 L90.3 445.5"/>
    <path d="M377.2 444.5 H381 M378 443 V440.5 H380 V443"/>
    <rect x="449" y="440.4" width="4.6" height="3.6"/>
    <rect x="464.4" y="440" width="2.6" height="2"/><rect x="468.2" y="440" width="2.6" height="2"/>
    <rect x="464.4" y="443" width="2.6" height="2"/><rect x="468.2" y="443" width="2.6" height="2"/>
    <path d="M480.4 440.6 Q482.3 440 483.2 440.8 Q484.1 440 486 440.6 V445.3 Q484.1 444.7 483.2 445.4 Q482.3 444.7 480.4 445.3 Z M483.2 440.8 V445.4"/>
    <path d="M496.4 440.6 H502.2 M497.2 440.6 V442.8 H501.4 V440.6 M499.3 442.8 L498 445.4 M499.3 442.8 L500.6 445.4"/>
    <path d="M510 443 H512 M514 443 H557 M535.4 442.5 V443.5 M558.2 443 H561.4 M559.8 441.4 V444.6"/>
    <rect x="582.5" y="440.3" width="5.2" height="5"/><path d="M583.2 441 L584.6 442.4 M587 441 L585.6 442.4 M583.2 444.6 L584.6 443.2 M587 444.6 L585.6 443.2" stroke-width="0.4"/>
  </g>
  <path d="M406 440.2 H411 V443.6 H408 L406.8 444.8 V443.6 H406 Z" fill="#666"/>
</svg>
<div class="a" style="left:443.5px;top:438.6px;width:15.5px;height:7.8px;background:#d4d4d4"></div>
<svg class="a" style="left:443px;top:438px" width="17" height="9" viewBox="443 438 17 9"><rect x="448.6" y="440.2" width="5" height="3.8" fill="none" stroke="#666" stroke-width="0.5"/></svg>
<div class="a" style="left:525.3px;top:440.6px;width:1.3px;height:4.8px;background:#555"></div>
<div class="t" style="left:383.7px;top:440.2px;color:#555">Notes</div>
<div class="t" style="left:412.6px;top:440.2px;color:#555">Comments</div>
<div class="t" style="left:567.5px;top:440.2px;color:#555">50%</div>

<!-- dropdown menu -->
<div class="a" style="left:487.6px;top:199.8px;width:63.4px;height:20.2px;background:#fff;box-shadow:0.5px 1px 1.5px rgba(0,0,0,0.3)"></div>
<div class="a" style="left:488.2px;top:210.5px;width:62.3px;height:9.4px;background:#c6c6c6"></div>
<svg class="a" style="left:487px;top:199px" width="20" height="24" viewBox="487 199 20 24">
  <rect x="490.3" y="202.4" width="4.9" height="4.6" fill="#fff" stroke="#555" stroke-width="0.8"/>
  <rect x="490.3" y="202.4" width="4.9" height="1" fill="#555"/>
  <circle cx="494.5" cy="206.7" r="1.8" fill="#5b9bd5"/>
  <rect x="494.3" y="206.2" width="0.45" height="1.5" fill="#fff"/>
  <rect x="490.4" y="212.8" width="5" height="4.6" fill="#fff" stroke="#6a6a6a" stroke-width="0.9"/>
</svg>
<div class="a" style="left:501.2px;top:207.2px;width:3.6px;height:0.5px;background:#666"></div><div class="a" style="left:530.3px;top:217.2px;width:3.2px;height:0.5px;background:#666"></div>
<div class="t" style="left:501px;top:202.3px;color:#444">Online Video...</div>
<div class="t" style="left:500px;top:212.3px;color:#444">Video on My PC...</div>
<svg class="a" style="left:499px;top:211px" width="8" height="12" viewBox="499 211 8 12">
  <path d="M500.25 212.7 V219.9 L501.9 218.3 L503.1 221 L504.2 220.6 L503 217.9 L505.1 217.9 Z" fill="#fff" stroke="#222" stroke-width="0.7"/>
</svg>
</body></html>
